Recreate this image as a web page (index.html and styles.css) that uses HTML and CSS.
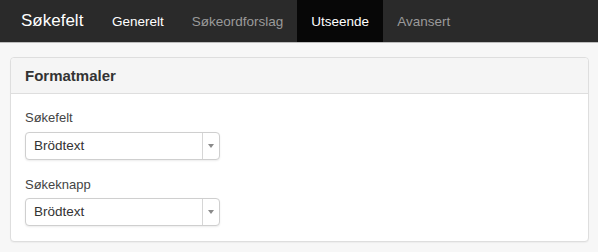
FILE: index.html
```html
<!DOCTYPE html>
<html lang="nb">
  <head>
    <meta charset="UTF-8" />
    <meta name="viewport" content="width=device-width, initial-scale=1.0" />
    <title>Søkefelt</title>

    <link rel="stylesheet" href="styles.css">
  </head>
  <body>
    <nav class="navbar">
      <a class="navbar-brand" href="#">Søkefelt</a>
      <ul class="navbar-nav">
        <li><a class="nav-link nav-link-light" href="#">Generelt</a></li>
        <li><a class="nav-link" href="#">Søkeordforslag</a></li>
        <li><a class="nav-link active" href="#">Utseende</a></li>
        <li><a class="nav-link" href="#">Avansert</a></li>
      </ul>
    </nav>

    <div class="content">
      <section class="panel">
        <div class="panel-heading">Formatmaler</div>
        <div class="panel-body">
          <div class="form-group">
            <label class="form-label">Søkefelt</label>
            <div class="select">
              <span class="select-value">Brödtext</span>
              <span class="select-arrow"></span>
            </div>
          </div>
          <div class="form-group">
            <label class="form-label">Søkeknapp</label>
            <div class="select">
              <span class="select-value">Brödtext</span>
              <span class="select-arrow"></span>
            </div>
          </div>
        </div>
      </section>
    </div>
  </body>
</html>
```

FILE: styles.css
```css
html,
body {
  margin: 0;
  padding: 0;
}

body {
  background: #f7f7f7;
  font-family: "Liberation Sans", Arial, sans-serif;
  color: #333;
  width: 598px;
  height: 252px;
  overflow: hidden;
}

a {
  text-decoration: none;
}

.navbar {
  display: flex;
  align-items: stretch;
  height: 42px;
  background: #2a2a2a;
  border-bottom: 1px solid #bdbdbd;
}

.navbar-brand {
  display: flex;
  align-items: center;
  padding: 0 15px 0 21px;
  width: 62px;
  font-size: 17px;
  color: #fff;
}

.navbar-nav {
  display: flex;
  margin: 0;
  padding: 0;
  list-style: none;
}

.nav-link {
  display: flex;
  align-items: center;
  height: 100%;
  padding: 0 14px;
  font-size: 13.5px;
  color: #9a9a9a;
}

.nav-link-light {
  color: #fff;
}

.nav-link.active {
  background: #070707;
  color: #fff;
}

.content {
  padding: 14px 9px 0 10px;
}

.panel {
  background: #fff;
  border: 1px solid #dedede;
  border-radius: 4px;
  box-shadow: 0 1px 1px rgba(0, 0, 0, 0.04);
}

.panel-heading {
  height: 35px;
  line-height: 35px;
  padding: 0 14px;
  background: #f5f5f5;
  border-bottom: 1px solid #dedede;
  border-radius: 4px 4px 0 0;
  font-size: 15px;
  font-weight: bold;
  color: #333;
}

.panel-body {
  padding: 15px 14px 15px 14px;
}

.form-group + .form-group {
  margin-top: 16px;
}

.form-label {
  display: block;
  height: 18px;
  line-height: 18px;
  margin-bottom: 5px;
  font-size: 13px;
  color: #444;
}

.form-group + .form-group .form-label {
  margin-bottom: 4px;
}

.select {
  display: flex;
  width: 193px;
  height: 26px;
  border: 1px solid #cfcfcf;
  border-radius: 4px;
  background: #fff;
  box-shadow: 0 1px 2px rgba(0, 0, 0, 0.08);
}

.select-value {
  flex: 1;
  line-height: 26px;
  padding-left: 8px;
  font-size: 13.5px;
  color: #333;
}

.select-arrow {
  position: relative;
  width: 16px;
  border-left: 1px solid #d6d6d6;
}

.select-arrow::after {
  content: "";
  position: absolute;
  left: 5px;
  top: 11px;
  border-left: 3px solid transparent;
  border-right: 3px solid transparent;
  border-top: 4px solid #8a8a8a;
}
```
